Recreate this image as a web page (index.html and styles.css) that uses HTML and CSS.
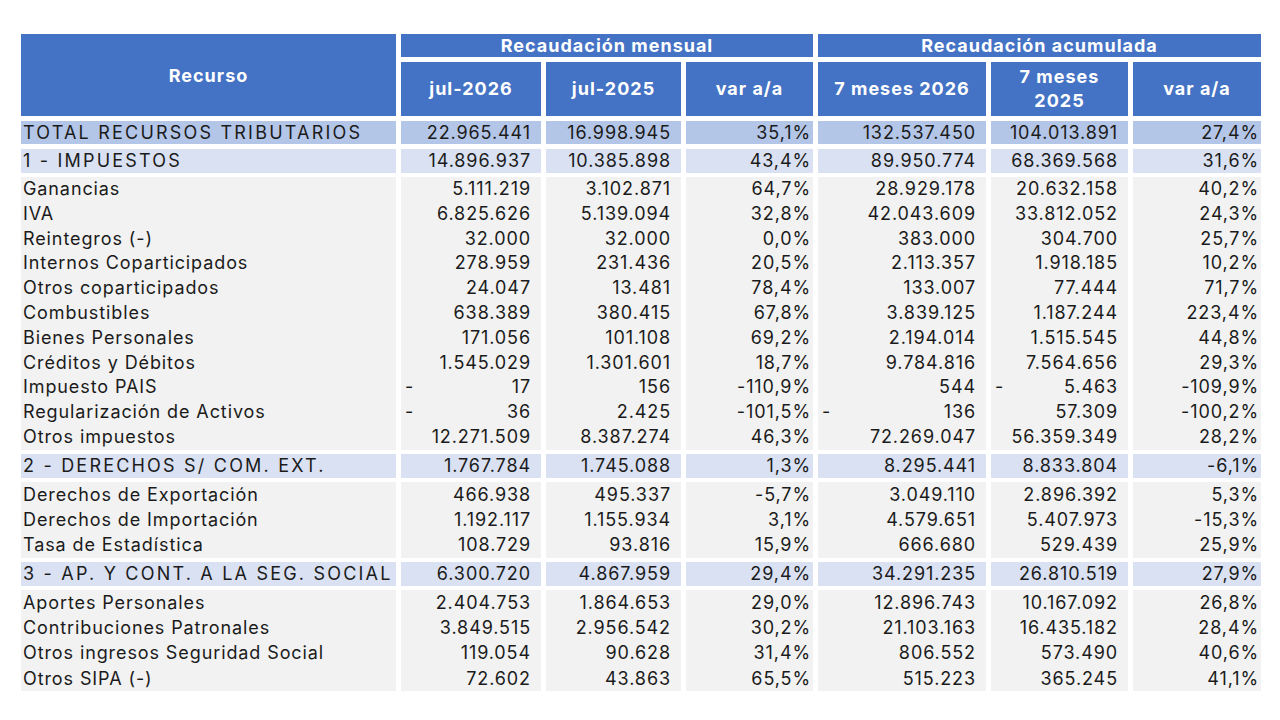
FILE: index.html
```html
<!DOCTYPE html>
<html lang="es">
<head>
<meta charset="utf-8">
<title>Recaudación tributaria</title>
<link rel="stylesheet" href="styles.css">
</head>
<body>
<table class="rec">
  <colgroup>
    <col class="c-label"><col class="c-m1"><col class="c-m2"><col class="c-m3">
    <col class="c-a1"><col class="c-a2"><col class="c-a3">
  </colgroup>
  <thead>
    <tr class="h1">
      <th rowspan="2">Recurso</th>
      <th colspan="3">Recaudación mensual</th>
      <th colspan="3">Recaudación acumulada</th>
    </tr>
    <tr class="h2">
      <th>jul-2026</th><th>jul-2025</th><th>var a/a</th>
      <th>7 meses 2026</th><th>7 meses<br>2025</th><th>var a/a</th>
    </tr>
  </thead>
  <tbody class="g-imp">
    <tr class="total gap5">
      <td class="caps">TOTAL RECURSOS TRIBUTARIOS</td><td class="num">22.965.441</td><td class="num">16.998.945</td><td class="pct">35,1%</td><td class="num">132.537.450</td><td class="num">104.013.891</td><td class="pct">27,4%</td>
    </tr>
    <tr class="grp gap5">
      <td class="caps">1 - IMPUESTOS</td><td class="num">14.896.937</td><td class="num">10.385.898</td><td class="pct">43,4%</td><td class="num">89.950.774</td><td class="num">68.369.568</td><td class="pct">31,6%</td>
    </tr>
    <tr class="det gap4">
      <td>Ganancias</td><td class="num">5.111.219</td><td class="num">3.102.871</td><td class="pct">64,7%</td><td class="num">28.929.178</td><td class="num">20.632.158</td><td class="pct">40,2%</td>
    </tr>
    <tr class="det">
      <td>IVA</td><td class="num">6.825.626</td><td class="num">5.139.094</td><td class="pct">32,8%</td><td class="num">42.043.609</td><td class="num">33.812.052</td><td class="pct">24,3%</td>
    </tr>
    <tr class="det">
      <td>Reintegros (-)</td><td class="num">32.000</td><td class="num">32.000</td><td class="pct">0,0%</td><td class="num">383.000</td><td class="num">304.700</td><td class="pct">25,7%</td>
    </tr>
    <tr class="det">
      <td>Internos Coparticipados</td><td class="num">278.959</td><td class="num">231.436</td><td class="pct">20,5%</td><td class="num">2.113.357</td><td class="num">1.918.185</td><td class="pct">10,2%</td>
    </tr>
    <tr class="det">
      <td>Otros coparticipados</td><td class="num">24.047</td><td class="num">13.481</td><td class="pct">78,4%</td><td class="num">133.007</td><td class="num">77.444</td><td class="pct">71,7%</td>
    </tr>
    <tr class="det">
      <td>Combustibles</td><td class="num">638.389</td><td class="num">380.415</td><td class="pct">67,8%</td><td class="num">3.839.125</td><td class="num">1.187.244</td><td class="pct">223,4%</td>
    </tr>
    <tr class="det">
      <td>Bienes Personales</td><td class="num">171.056</td><td class="num">101.108</td><td class="pct">69,2%</td><td class="num">2.194.014</td><td class="num">1.515.545</td><td class="pct">44,8%</td>
    </tr>
    <tr class="det">
      <td>Créditos y Débitos</td><td class="num">1.545.029</td><td class="num">1.301.601</td><td class="pct">18,7%</td><td class="num">9.784.816</td><td class="num">7.564.656</td><td class="pct">29,3%</td>
    </tr>
    <tr class="det">
      <td>Impuesto PAIS</td><td class="num"><span class="neg">-</span>17</td><td class="num">156</td><td class="pct">-110,9%</td><td class="num">544</td><td class="num"><span class="neg">-</span>5.463</td><td class="pct">-109,9%</td>
    </tr>
    <tr class="det">
      <td>Regularización de Activos</td><td class="num"><span class="neg">-</span>36</td><td class="num">2.425</td><td class="pct">-101,5%</td><td class="num"><span class="neg">-</span>136</td><td class="num">57.309</td><td class="pct">-100,2%</td>
    </tr>
    <tr class="det">
      <td>Otros impuestos</td><td class="num">12.271.509</td><td class="num">8.387.274</td><td class="pct">46,3%</td><td class="num">72.269.047</td><td class="num">56.359.349</td><td class="pct">28,2%</td>
    </tr>
  </tbody>
  <tbody>
    <tr class="grp gap4">
      <td class="caps">2 - DERECHOS S/ COM. EXT.</td><td class="num">1.767.784</td><td class="num">1.745.088</td><td class="pct">1,3%</td><td class="num">8.295.441</td><td class="num">8.833.804</td><td class="pct">-6,1%</td>
    </tr>
    <tr class="det gap4">
      <td>Derechos de Exportación</td><td class="num">466.938</td><td class="num">495.337</td><td class="pct">-5,7%</td><td class="num">3.049.110</td><td class="num">2.896.392</td><td class="pct">5,3%</td>
    </tr>
    <tr class="det">
      <td>Derechos de Importación</td><td class="num">1.192.117</td><td class="num">1.155.934</td><td class="pct">3,1%</td><td class="num">4.579.651</td><td class="num">5.407.973</td><td class="pct">-15,3%</td>
    </tr>
    <tr class="det">
      <td>Tasa de Estadística</td><td class="num">108.729</td><td class="num">93.816</td><td class="pct">15,9%</td><td class="num">666.680</td><td class="num">529.439</td><td class="pct">25,9%</td>
    </tr>
  </tbody>
  <tbody>
    <tr class="grp gap4">
      <td class="caps">3 - AP. Y CONT. A LA SEG. SOCIAL</td><td class="num">6.300.720</td><td class="num">4.867.959</td><td class="pct">29,4%</td><td class="num">34.291.235</td><td class="num">26.810.519</td><td class="pct">27,9%</td>
    </tr>
    <tr class="det gap4">
      <td>Aportes Personales</td><td class="num">2.404.753</td><td class="num">1.864.653</td><td class="pct">29,0%</td><td class="num">12.896.743</td><td class="num">10.167.092</td><td class="pct">26,8%</td>
    </tr>
    <tr class="det">
      <td>Contribuciones Patronales</td><td class="num">3.849.515</td><td class="num">2.956.542</td><td class="pct">30,2%</td><td class="num">21.103.163</td><td class="num">16.435.182</td><td class="pct">28,4%</td>
    </tr>
    <tr class="det">
      <td>Otros ingresos Seguridad Social</td><td class="num">119.054</td><td class="num">90.628</td><td class="pct">31,4%</td><td class="num">806.552</td><td class="num">573.490</td><td class="pct">40,6%</td>
    </tr>
    <tr class="det">
      <td>Otros SIPA (-)</td><td class="num">72.602</td><td class="num">43.863</td><td class="pct">65,5%</td><td class="num">515.223</td><td class="num">365.245</td><td class="pct">41,1%</td>
    </tr>
  </tbody>
</table>
</body>
</html>
```
FILE: styles.css
```css
body {
 margin: 0;
 background: #fff;
 font-family: "Inter", "Liberation Sans", sans-serif;
 color: #1b1b1b;
}
.rec {
 margin: 34px 0 0 16px;
 border-collapse: separate;
 border-spacing: 5px 0;
 table-layout: fixed;
 width: 1250px;
 font-size: 18px;
 letter-spacing: 0.9px;
}
.c-label { width: 375px; }
.c-m1 { width: 140px; }
.c-m2 { width: 135px; }
.c-m3 { width: 127px; }
.c-a1 { width: 168px; }
.c-a2 { width: 137px; }
.c-a3 { width: 128px; }

.rec th {
 background: #4472c4;
 color: #fff;
 font-weight: 700;
 text-align: center;
 padding: 0;
 letter-spacing: 1px;
}
.h1 th { height: 23px; line-height: 23px; }
.h2 th {
 height: 54px;
 line-height: 24px;
 border-top: 5px solid #fff;
}

.rec td {
 padding: 0 2px;
 height: 24px;
 line-height: 24px;
 white-space: nowrap;
}
.rec td.caps { letter-spacing: 2.2px; }
.rec td.num { text-align: right; padding-right: 10px; }
.rec td.pct { text-align: right; padding-right: 2px; }
.neg { float: left; padding-left: 2px; }

.total td { background: #b4c6e7; height: 23px; line-height: 23px; }
.grp td { background: #d9e1f2; }
.det td { background: #f2f2f2; height: 25.3px; line-height: 25.3px; }
.g-imp .det td { height: 24.8px; line-height: 24.8px; }

.gap5 td { border-top: 5px solid #fff; }
.gap4 td { border-top: 4px solid #fff; }
```
